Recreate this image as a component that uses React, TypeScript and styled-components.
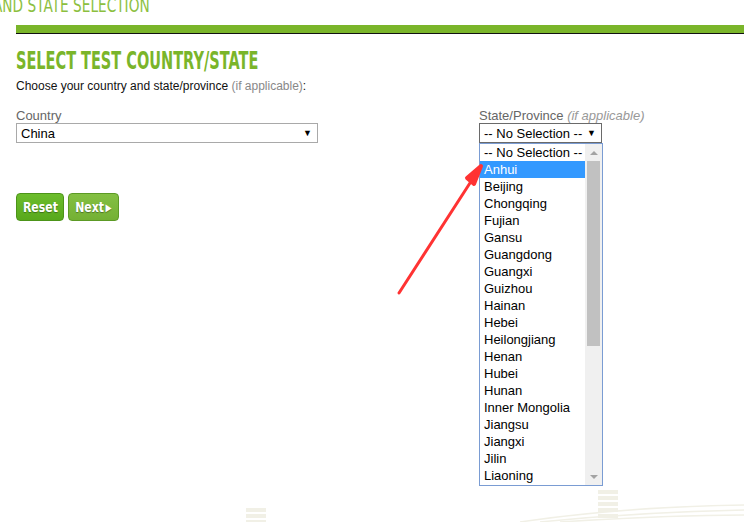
import React from "react";
import styled, { createGlobalStyle } from "styled-components";

const Global = createGlobalStyle`
  html, body { margin: 0; padding: 0; background: #fff; overflow: hidden; }
  body { font-family: "Liberation Sans", Arial, sans-serif; width: 744px; height: 522px; }
`;

const Page = styled.div`
  position: relative;
  width: 744px;
  height: 522px;
  overflow: hidden;
`;

const TopTitle = styled.div`
  font-family: "DejaVu Sans", sans-serif;
  font-size: 19px;
  line-height: 19px;
  height: 14px;
  color: #8cbf3f;
  margin-top: -4px;
  margin-left: -7px;
  white-space: nowrap;
  transform: scaleX(0.72);
  transform-origin: left top;
`;

const Bar = styled.div`
  margin: 15px 0 0 16px;
  height: 8px;
  background: #7ab52a;
  border-bottom: 1px solid #111;
`;

const Content = styled.div`
  padding-left: 16px;
`;

const Heading = styled.h1`
  margin: 13px 0 0;
  font-family: "DejaVu Sans", sans-serif;
  font-weight: bold;
  font-size: 25px;
  line-height: 28px;
  color: #7ab52a;
  white-space: nowrap;
  transform: scaleX(0.58);
  transform-origin: left top;
`;

const Intro = styled.p`
  margin: 4px 0 0;
  font-size: 12px;
  line-height: 14px;
  color: #111;
`;

const Muted = styled.span`
  color: #888;
`;

const FieldsRow = styled.div`
  display: flex;
  margin-top: 15px;
`;

const Field = styled.div<{ $width: number; $offset?: number }>`
  position: relative;
  width: ${(p) => p.$width}px;
  margin-left: ${(p) => p.$offset ?? 0}px;
`;

const Label = styled.div`
  font-family: "Liberation Sans", Arial, sans-serif;
  font-size: 13px;
  line-height: 15px;
  color: #666;
  white-space: nowrap;
`;

const Hint = styled.span`
  font-style: italic;
  color: #999;
`;

const SelectBox = styled.div<{ $dark?: boolean }>`
  box-sizing: border-box;
  height: 20px;
  border: 1px solid ${(p) => (p.$dark ? "#6a6a6a" : "#a9a9a9")};
  background: #fff;
  display: flex;
  align-items: center;
  justify-content: space-between;
  padding: 0 5px 0 4px;
  font-size: 13px;
  color: #000;
`;

const Caret = styled.span`
  font-size: 9px;
  color: #000;
`;

const Dropdown = styled.div`
  position: absolute;
  left: 0;
  top: 35px;
  width: 124px;
  height: 343px;
  box-sizing: border-box;
  border: 1px solid #7a9cd3;
  background: #fff;
  display: flex;
  z-index: 2;
`;

const OptionList = styled.div`
  flex: 1;
  display: flex;
  flex-direction: column;
`;

const Option = styled.div<{ $selected?: boolean }>`
  height: 17px;
  line-height: 17px;
  font-size: 13px;
  padding-left: 4px;
  white-space: nowrap;
  background: ${(p) => (p.$selected ? "#3399ff" : "transparent")};
  color: ${(p) => (p.$selected ? "#fff" : "#000")};
`;

const Scrollbar = styled.div`
  width: 17px;
  background: #f0f0f0;
  display: flex;
  flex-direction: column;
  align-items: center;
`;

const ScrollArrow = styled.div<{ $down?: boolean }>`
  height: 17px;
  width: 17px;
  display: flex;
  align-items: center;
  justify-content: center;
  &::after {
    content: "";
    border-left: 4px solid transparent;
    border-right: 4px solid transparent;
    ${(p) =>
      p.$down
        ? "border-top: 4px solid #a3a3a3;"
        : "border-bottom: 4px solid #a3a3a3;"}
  }
`;

const Thumb = styled.div`
  width: 13px;
  height: 185px;
  background: #c1c1c1;
`;

const Spacer = styled.div`
  flex: 1;
`;

const Buttons = styled.div`
  display: flex;
  gap: 4px;
  margin-top: 50px;
`;

const Button = styled.button<{ $light?: boolean; $width: number }>`
  width: ${(p) => p.$width}px;
  height: 28px;
  box-sizing: border-box;
  padding: 0;
  border-radius: 4px;
  border: 1px solid ${(p) => (p.$light ? "#5c9a25" : "#4c9419")};
  background: ${(p) =>
    p.$light
      ? "linear-gradient(#84c043, #74b034)"
      : "linear-gradient(#6cbd2c, #58a81c)"};
  color: #fff;
  font-family: "DejaVu Sans", sans-serif;
  font-weight: bold;
  font-size: 14px;
  text-shadow: 0 1px 1px rgba(0, 0, 0, 0.35);
  display: flex;
  align-items: center;
  justify-content: center;
  cursor: pointer;
`;

const ButtonText = styled.span`
  display: inline-flex;
  align-items: center;
  white-space: nowrap;
  transform: scaleX(0.78);
  transform-origin: center;
`;

const Triangle = styled.span`
  font-size: 10px;
  margin-left: 2px;
`;

const Decor = styled.svg`
  position: absolute;
  left: 0;
  top: 0;
  pointer-events: none;
`;

const provinces = [
  "-- No Selection --",
  "Anhui",
  "Beijing",
  "Chongqing",
  "Fujian",
  "Gansu",
  "Guangdong",
  "Guangxi",
  "Guizhou",
  "Hainan",
  "Hebei",
  "Heilongjiang",
  "Henan",
  "Hubei",
  "Hunan",
  "Inner Mongolia",
  "Jiangsu",
  "Jiangxi",
  "Jilin",
  "Liaoning",
];

export default function App() {
  return (
    <Page>
      <Global />
      <Decor width="744" height="522">
        <g fill="#f1f0e6">
          <rect x="246" y="508" width="20" height="4" />
          <rect x="246" y="514" width="20" height="4" />
          <rect x="246" y="520" width="20" height="4" />
          <rect x="598" y="490" width="20" height="4" />
          <rect x="598" y="496" width="20" height="4" />
          <rect x="598" y="502" width="20" height="4" />
          <rect x="598" y="508" width="20" height="4" />
          <rect x="598" y="514" width="20" height="4" />
        </g>
        <g fill="none" stroke="#f1f0e6" strokeWidth="1.5">
          <path d="M520 522 C600 510 680 506 744 505" />
          <path d="M540 522 C620 514 690 511 744 510" />
          <path d="M560 522 C640 517 700 515 744 515" />
        </g>
      </Decor>
      <TopTitle>AND STATE SELECTION</TopTitle>
      <Bar />
      <Content>
        <Heading>SELECT TEST COUNTRY/STATE</Heading>
        <Intro>
          Choose your country and state/province <Muted>(if applicable)</Muted>:
        </Intro>
        <FieldsRow>
          <Field $width={302}>
            <Label>Country</Label>
            <SelectBox>
              <span>China</span>
              <Caret>▼</Caret>
            </SelectBox>
          </Field>
          <Field $width={123} $offset={161}>
            <Label>
              State/Province <Hint>(if applicable)</Hint>
            </Label>
            <SelectBox $dark>
              <span>-- No Selection --</span>
              <Caret>▼</Caret>
            </SelectBox>
            <Dropdown>
              <OptionList>
                {provinces.map((p) => (
                  <Option key={p} $selected={p === "Anhui"}>
                    {p}
                  </Option>
                ))}
              </OptionList>
              <Scrollbar>
                <ScrollArrow />
                <Thumb />
                <Spacer />
                <ScrollArrow $down />
              </Scrollbar>
            </Dropdown>
          </Field>
        </FieldsRow>
        <Buttons>
          <Button $width={48}>
            <ButtonText>Reset</ButtonText>
          </Button>
          <Button $light $width={51}>
            <ButtonText>
              Next<Triangle>▶</Triangle>
            </ButtonText>
          </Button>
        </Buttons>
      </Content>
      <Decor width="744" height="522" style={{ zIndex: 3 }}>
        <line x1="399" y1="293" x2="470" y2="183" stroke="#f33" strokeWidth="3" strokeLinecap="round" />
        <polygon points="481,166 467,178 474,184" fill="#f33" stroke="#f33" strokeWidth="4" strokeLinejoin="round" />
      </Decor>
    </Page>
  );
}
